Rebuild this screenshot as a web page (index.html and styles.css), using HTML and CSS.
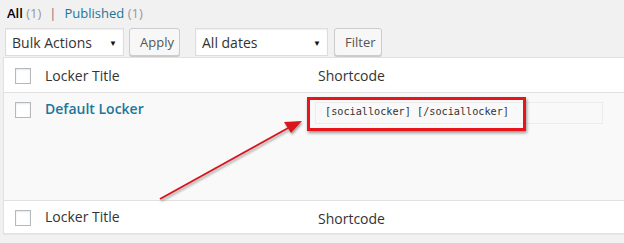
FILE: index.html
```html
<!DOCTYPE html>
<html>
<head>
<meta charset="utf-8">
<link rel="stylesheet" href="styles.css">
</head>
<body>
<div class="page">
  <ul class="views">
    <li><a class="current">All</a> <span class="count">(1)</span></li>
    <li class="sep">|</li>
    <li><a class="link">Published</a> <span class="count">(1)</span></li>
  </ul>
  <div class="tablenav">
    <div class="select bulk">Bulk Actions<span class="caret">▼</span></div>
    <button class="btn apply">Apply</button>
    <div class="select dates">All dates<span class="caret">▼</span></div>
    <button class="btn filter">Filter</button>
  </div>
  <div class="table">
    <div class="row head">
      <div class="cb"><span class="box"></span></div>
      <div class="title">Locker Title</div>
      <div class="code">Shortcode</div>
    </div>
    <div class="row data">
      <div class="cb"><span class="box"></span></div>
      <div class="title"><a class="name">Default Locker</a></div>
      <div class="code">
        <div class="input">[sociallocker] [/sociallocker]</div>
        <div class="highlight"></div>
      </div>
    </div>
    <div class="row foot">
      <div class="cb"><span class="box"></span></div>
      <div class="title">Locker Title</div>
      <div class="code">Shortcode</div>
    </div>
  </div>
  <svg class="arrow" width="624" height="243" viewBox="0 0 624 243">
    <defs>
      <filter id="sh" x="-20%" y="-20%" width="140%" height="140%">
        <feDropShadow dx="1" dy="2" stdDeviation="1.2" flood-color="#000" flood-opacity="0.35"/>
      </filter>
    </defs>
    <g filter="url(#sh)">
      <line x1="160" y1="199" x2="290" y2="127" stroke="#d8141c" stroke-width="2"/>
      <polygon points="302,121 284,122 291,133" fill="#d8141c"/>
    </g>
  </svg>
</div>
</body>
</html>
```
FILE: styles.css
```css
html, body {
  margin: 0;
  padding: 0;
  background: #f1f1f1;
  overflow: hidden;
}
.page {
  position: relative;
  width: 624px;
  height: 243px;
  font-family: "Open Sans", "Liberation Sans", sans-serif;
  color: #444;
  font-size: 13px;
}
.views {
  list-style: none;
  margin: 0;
  padding: 3px 0 0 7px;
  display: flex;
  gap: 6px;
  height: 20px;
  align-items: center;
  font-size: 13px;
}
.views li { margin: 0; }
.views .current { color: #000; font-weight: 600; }
.views .count { color: #999; }
.views .sep { color: #777; padding: 0 2px; }
.views .link { color: #21759b; }
.tablenav {
  display: flex;
  align-items: center;
  margin-top: 5px;
  padding-left: 5px;
  height: 28px;
}
.select {
  box-sizing: border-box;
  height: 28px;
  background: #fff;
  border: 1px solid #ddd;
  box-shadow: inset 0 1px 2px rgba(0,0,0,0.07);
  display: flex;
  align-items: center;
  padding: 0 6px;
  font-size: 14px;
  color: #333;
  position: relative;
}
.select .caret {
  position: absolute;
  right: 6px;
  font-size: 8px;
  color: #111;
}
.bulk { width: 119px; }
.dates { width: 133px; margin-left: 15px; }
.btn {
  box-sizing: border-box;
  height: 28px;
  background: #f7f7f7;
  border: 1px solid #ccc;
  border-radius: 3px;
  box-shadow: 0 1px 0 #ccc;
  font-family: inherit;
  font-size: 13px;
  color: #555;
  padding: 0 10px;
  margin-left: 5px;
}
.apply { width: 51px; }
.filter { width: 48px; margin-left: 6px; }
.table {
  margin-top: 1px;
  margin-left: 3px;
  width: 640px;
  border: 1px solid #e1e1e1;
  box-shadow: 0 1px 1px rgba(0,0,0,0.04);
  background: #fff;
}
.row {
  display: flex;
  align-items: flex-start;
}
.row.head { height: 34px; border-bottom: 1px solid #e1e1e1; }
.row.foot { height: 32px; border-top: 1px solid #e1e1e1; }
.row.data { height: 107px; background: #f9f9f9; }
.cb {
  width: 36px;
  padding-left: 11px;
  box-sizing: border-box;
  padding-top: 10px;
}
.box {
  display: block;
  width: 14px;
  height: 14px;
  border: 1px solid #b4b9be;
  background: #fff;
  box-shadow: inset 0 1px 2px rgba(0,0,0,0.1);
}
.row.foot .cb { padding-top: 9px; }
.row.data .cb { padding-top: 9px; }
.title {
  width: 273px;
  padding-left: 5px;
  padding-top: 8px;
  font-size: 14px;
  color: #333;
}
.row.foot .title { padding-top: 6px; }
.code {
  padding-top: 8px;
  font-size: 14px;
  color: #333;
  position: relative;
}
.row.foot .code { padding-top: 8px; }
.name {
  color: #21759b;
  font-weight: 600;
  font-size: 14px;
}
.row.data .title { padding-top: 6px; }
.row.data .code { padding-top: 9px; margin-left: -3px; }
.input {
  box-sizing: border-box;
  width: 288px;
  height: 22px;
  border: 1px solid #ececec;
  background: #f9f9f9;
  font-family: "DejaVu Sans Mono", "Liberation Mono", monospace;
  font-size: 10.2px;
  color: #333;
  padding: 3px 0 0 9px;
}
.highlight {
  position: absolute;
  left: -8px;
  top: 4px;
  width: 219px;
  height: 34px;
  box-sizing: border-box;
  border: 3px solid #e8141c;
  box-shadow: 1px 2px 3px rgba(0,0,0,0.4);
}
.arrow {
  position: absolute;
  left: 0;
  top: 0;
  pointer-events: none;
}
```
